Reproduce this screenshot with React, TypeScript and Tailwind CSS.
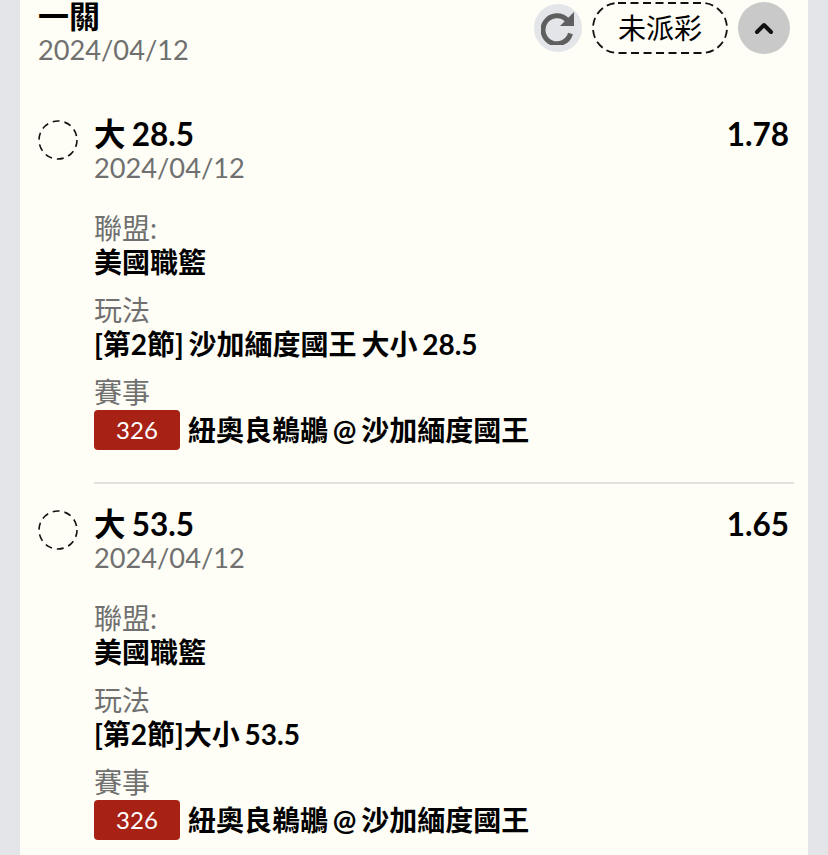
const bets = [
  { pick: "大 28.5", odds: "1.78", play: "[第2節] 沙加緬度國王 大小 28.5" },
  { pick: "大 53.5", odds: "1.65", play: "[第2節]大小 53.5" },
];

const font = "font-['Lato','Noto_Sans_CJK_TC',sans-serif]";

const BetRow = ({ pick, odds, play }: { pick: string; odds: string; play: string }) => {
  return (
    <div className="flex">
      <svg className="mt-[3px] shrink-0" width="40" height="40" viewBox="0 0 40 40" fill="none">
        <circle cx="20" cy="20" r="19" stroke="#111" strokeWidth="1.6" strokeDasharray="7 4.94" />
      </svg>
      <div className="ml-[16px] flex-1">
        <div className="flex h-[34px] items-center justify-between pr-[1px] pt-[2px] text-[31.5px] font-bold text-black [word-spacing:-1.5px]">
          <span>{pick}</span>
          <span>{odds}</span>
        </div>
        <p className="h-[33px] text-[27.2px] leading-[33px] text-[#707070]">2024/04/12</p>
        <p className="mt-[27px] h-[34px] text-[28px] leading-[34px] text-[#707070]">聯盟:</p>
        <p className="h-[34px] text-[28px] font-bold leading-[34px] text-black">美國職籃</p>
        <p className="mt-[14px] h-[34px] text-[28px] leading-[34px] text-[#707070]">玩法</p>
        <p className="h-[34px] text-[28px] font-bold leading-[34px] text-black [word-spacing:-2px]">{play}</p>
        <p className="mt-[14px] h-[34px] text-[28px] leading-[34px] text-[#707070]">賽事</p>
        <div className="mt-[1px] flex h-[40px] items-center">
          <span className="flex h-[40px] w-[86px] items-center justify-center rounded-[4px] bg-[#a82115] text-[24px] leading-[40px] text-white">
            326
          </span>
          <span className="ml-[8px] text-[28px] font-bold leading-[40px] text-black [word-spacing:-2px]">紐奧良鵜鶘 @ 沙加緬度國王</span>
        </div>
      </div>
    </div>
  );
};

export default function App() {
  return (
    <div className={`h-[855px] overflow-hidden bg-[#e3e5e9] px-[20px] ${font}`}>
      <div className="h-full bg-[#fefef6] px-[18px]">
        <div className="flex items-start justify-between">
          <div>
            <h1 className="h-[32px] text-[31px] font-bold leading-[32px] text-black">一關</h1>
            <p className="h-[36px] text-[27.2px] leading-[36px] text-[#707070]">2024/04/12</p>
          </div>
          <div className="flex items-center pt-[2px]">
            <button className="flex h-[48px] w-[48px] items-center justify-center rounded-full bg-[#e3e5e9]">
              <svg width="34" height="34" viewBox="0 0 34 34" fill="none">
                <path d="M26 9 A14 14 0 1 0 29.5 22.5" stroke="#5f5f5f" strokeWidth="5" />
                <path d="M33 1 V15 H19 Z" fill="#5f5f5f" />
              </svg>
            </button>
            <span className="relative ml-[10px] flex h-[52px] w-[136px] items-center justify-center text-[28px] text-black">
              <svg className="absolute inset-0" width="136" height="52" viewBox="0 0 136 52" fill="none">
                <rect x="1" y="1" width="134" height="50" rx="25" stroke="#111" strokeWidth="1.8" strokeDasharray="8 4.5" />
              </svg>
              未派彩
            </span>
            <button className="ml-[10px] flex h-[52px] w-[52px] items-center justify-center rounded-full bg-[#c9c9c9]">
              <svg width="22" height="14" viewBox="0 0 22 14" fill="none" stroke="#111" strokeWidth="4" strokeLinecap="round" strokeLinejoin="round">
                <path d="M4 11 L11 4 L18 11" />
              </svg>
            </button>
          </div>
        </div>
        <div className="mt-[49px]">
          <BetRow {...bets[0]} />
          <div className="ml-[56px] mr-[-4px] mb-[23px] mt-[32px] h-[2px] bg-[#e2e2dc]" />
          <BetRow {...bets[1]} />
        </div>
      </div>
    </div>
  );
}
